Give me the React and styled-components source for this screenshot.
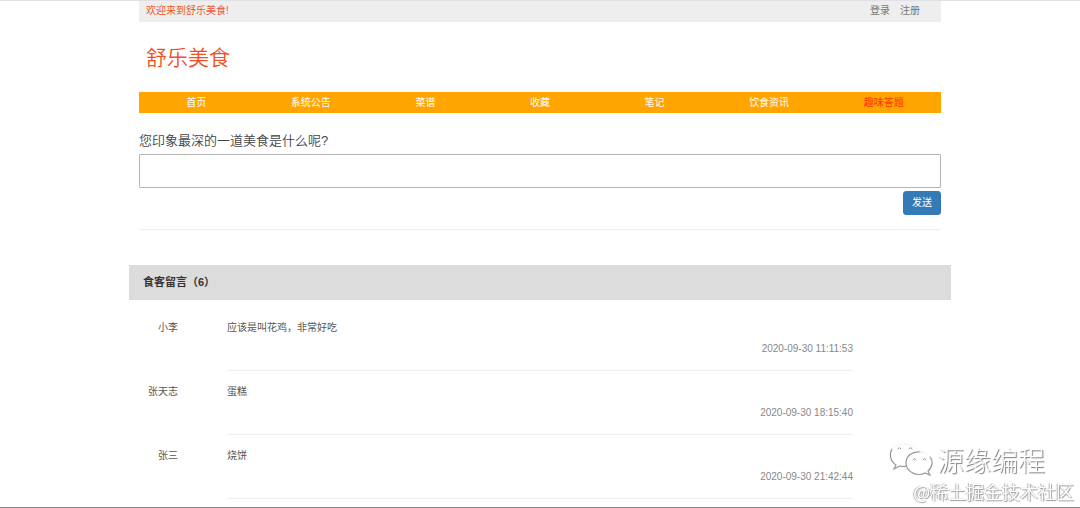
import React, { useState } from "react";
import styled, { createGlobalStyle } from "styled-components";

const GlobalStyle = createGlobalStyle`
  *, *::before, *::after {
    box-sizing: border-box;
  }

  body {
    margin: 0;
    background: #fff;
    color: #555;
    font-family: "Liberation Sans", "Noto Sans CJK SC", sans-serif;
    font-size: 10px;
    line-height: 22px;
  }
`;

const Page = styled.div`
  min-height: 100vh;
  border-top: 1px solid #e2e2e6;
  border-bottom: 1px solid #888;
`;

const Container = styled.div`
  max-width: 822px;
  margin: 0 auto;
`;

const Section = styled.div`
  padding: 0 10px;
`;

const TopBar = styled.div`
  display: flex;
  justify-content: space-between;
  height: 21px;
  padding: 0 21px 0 7px;
  background: #eee;
  line-height: 20px;
`;

const Welcome = styled.span`
  color: #f0542d;
`;

const Account = styled.div`
  display: flex;
  gap: 10px;
`;

const AccountLink = styled.a`
  color: #777;
  text-decoration: none;
`;

const SiteName = styled.h1`
  margin: 0;
  padding: 20px 7px 18px;
  color: #f0501e;
  font-size: 21px;
  font-weight: 350;
  line-height: 32px;
`;

const Nav = styled.nav`
  display: grid;
  grid-template-columns: repeat(7, 1fr);
  height: 21px;
  background: #ffa500;
`;

const NavLink = styled.a`
  color: ${({ $active }) => ($active ? "#ff3300" : "#fff")};
  text-align: center;
  text-decoration: none;
`;

const Form = styled.form`
  display: flex;
  flex-direction: column;
  padding: 18px 0 14px;
  border-bottom: 1px solid #eee;
`;

const Question = styled.label`
  color: #444;
  font-size: 13px;
  font-weight: 350;
  line-height: 20px;
`;

const Answer = styled.input`
  height: 34px;
  margin: 3px 0;
  padding: 0 8px;
  border: 1px solid #b4b4b4;
  border-radius: 1px;
  background: #fff;
  font: inherit;
`;

const SendButton = styled.button`
  align-self: flex-end;
  width: 38px;
  height: 24px;
  padding: 0;
  border: 1px solid #337ab7;
  border-radius: 3px;
  background: #337ab7;
  color: #fff;
  font: inherit;
  cursor: pointer;
`;

const CommentsTitle = styled.h2`
  margin: 35px 0 17px;
  padding: 0 14px;
  background: #dcdcdc;
  color: #333;
  font-size: 11px;
  font-weight: 700;
  line-height: 35px;
`;

const CommentRow = styled.article`
  display: grid;
  grid-template-columns: 49px 1fr;
  column-gap: 49px;
  padding-right: 98px;

  & + & {
    margin-top: 10px;
  }
`;

const Author = styled.span`
  text-align: right;
`;

const CommentBody = styled.div`
  height: 54px;
  border-bottom: 1px solid #eee;
`;

const CommentText = styled.p`
  margin: 0;
`;

const CommentTime = styled.time`
  display: block;
  color: #888;
  text-align: right;
  line-height: 20px;
`;

const Watermark = styled.div`
  position: fixed;
  right: 6px;
  bottom: 5px;
  display: flex;
  flex-direction: column;
  align-items: flex-end;
  color: #fff;
  font-family: "Noto Sans CJK SC", sans-serif;
  pointer-events: none;
`;

const Brand = styled.div`
  display: flex;
  align-items: center;
  gap: 4px;
  padding-right: 29px;
  font-size: 27px;
  font-weight: 300;
  line-height: 38px;
  text-shadow: 1px 1px 1px #777;
`;

const Community = styled.div`
  font-size: 18px;
  font-weight: 350;
  line-height: 24px;
  text-shadow: -1px 0 1px #aaa, 1px 1px 1px #999;
`;

const navItems = ["首页", "系统公告", "菜谱", "收藏", "笔记", "饮食资讯", "趣味答题"];

const comments = [
  { author: "小李", text: "应该是叫花鸡，非常好吃", time: "2020-09-30 11:11:53" },
  { author: "张天志", text: "蛋糕", time: "2020-09-30 18:15:40" },
  { author: "张三", text: "烧饼", time: "2020-09-30 21:42:44" },
];

const WechatLogo = () => (
  <svg width="44" height="34" viewBox="0 0 44 34" fill="none" strokeLinecap="round">
    <path
      d="M3 6C0 11 1 18 7 22L5 26L11 23Q14 24 17 23"
      stroke="#999"
      strokeWidth="1.2"
    />
    <path d="M3 6C9-1 23-1 30 8" stroke="#f2f2f2" />
    <path
      d="M31 9C23 8 17 13 17 20C17 29 28 34 36 30L41 32L39 28C44 24 44 17 41 14"
      stroke="#999"
      strokeWidth="1.2"
    />
    <path d="M31 9C35 9 39 11 41 14" stroke="#eee" />
    <path
      d="M9 6Q10 3 12 6M20 6Q22 3 23 6M24 17Q26 14 27 17M34 17Q36 14 37 17"
      stroke="#999"
    />
  </svg>
);

const Comment = ({ author, text, time }) => (
  <CommentRow>
    <Author>{author}</Author>
    <CommentBody>
      <CommentText>{text}</CommentText>
      <CommentTime>{time}</CommentTime>
    </CommentBody>
  </CommentRow>
);

const App = () => {
  const [answer, setAnswer] = useState("");

  const handleSubmit = (e) => {
    e.preventDefault();
    setAnswer("");
  };

  return (
    <>
      <GlobalStyle />
      <Page>
        <Container>
          <Section>
            <TopBar>
              <Welcome>欢迎来到舒乐美食!</Welcome>
              <Account>
                <AccountLink href="#login">登录</AccountLink>
                <AccountLink href="#register">注册</AccountLink>
              </Account>
            </TopBar>
            <SiteName>舒乐美食</SiteName>
            <Nav>
              {navItems.map((item) => (
                <NavLink key={item} href="#" $active={item === "趣味答题"}>
                  {item}
                </NavLink>
              ))}
            </Nav>
            <Form onSubmit={handleSubmit}>
              <Question htmlFor="answer">您印象最深的一道美食是什么呢?</Question>
              <Answer
                id="answer"
                type="text"
                value={answer}
                onChange={(e) => setAnswer(e.target.value)}
              />
              <SendButton type="submit">发送</SendButton>
            </Form>
          </Section>
          <CommentsTitle>食客留言（6）</CommentsTitle>
          {comments.map((comment) => (
            <Comment key={comment.time} {...comment} />
          ))}
        </Container>
      </Page>
      <Watermark>
        <Brand>
          <WechatLogo />
          <span>源缘编程</span>
        </Brand>
        <Community>@稀土掘金技术社区</Community>
      </Watermark>
    </>
  );
};

export default App;
